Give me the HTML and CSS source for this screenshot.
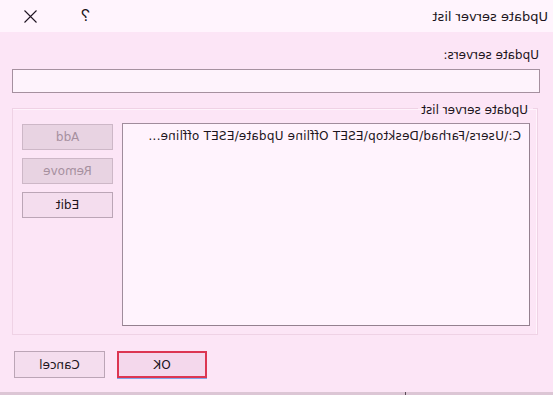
FILE: index.html
```html
<!DOCTYPE html>
<html>
<head>
<meta charset="utf-8">
<title>Update server list</title>
<link rel="stylesheet" href="styles.css">
</head>
<body>
<div class="window">
  <div class="titlebar">
    <span class="title">Update server list</span>
    <span class="help">?</span>
    <svg class="close" width="13" height="13" viewBox="0 0 13 13"><path d="M0.5 0.5 L12.5 12.5 M12.5 0.5 L0.5 12.5" stroke="#1f1422" stroke-width="1.1" fill="none"/></svg>
  </div>
  <div class="content">
    <div class="label">Update servers:</div>
    <input class="server-input" type="text">
    <fieldset class="group">
      <legend>Update server list</legend>
      <div class="list">C:\Users\Farhad\Desktop\ESET Offline Update\ESET offline...</div>
      <div class="buttons">
        <button class="btn" disabled>Add</button>
        <button class="btn" disabled>Remove</button>
        <button class="btn">Edit</button>
      </div>
    </fieldset>
    <div class="footer">
      <button class="btn big ok">OK</button>
      <button class="btn big">Cancel</button>
    </div>
  </div>
  <div class="bottom-strip"><span class="tick"></span></div>
</div>
</body>
</html>
```
FILE: styles.css
```css
html, body {
  margin: 0;
  padding: 0;
}
body {
  background: #fce5f6;
  font-family: "DejaVu Sans", sans-serif;
  font-size: 12px;
  color: #1c1420;
}
.window {
  width: 553px;
  height: 395px;
  transform: scaleX(-1);
  display: flex;
  flex-direction: column;
  background: #fce5f6;
  overflow: hidden;
}
.titlebar {
  height: 32px;
  flex: none;
  background: #fff4fd;
  display: flex;
  align-items: center;
  padding-left: 5px;
}
.title {
  flex: 1;
  font-size: 13px;
  line-height: 15px;
}
.help {
  width: 8px;
  font-family: "Liberation Sans", sans-serif;
  font-size: 16px;
  line-height: 16px;
  margin-right: 45px;
}
.close {
  display: block;
  margin-right: 24px;
}
.content {
  flex: 1;
  padding: 16px 12px 0 13px;
  display: flex;
  flex-direction: column;
}
.label {
  line-height: 15px;
  margin-left: 1px;
}
.server-input {
  margin: 6px 0 0 0;
  height: 24px;
  box-sizing: border-box;
  border: 1px solid #a5909f;
  background: #fef3fc;
  width: 100%;
  font: inherit;
  padding: 0 4px;
  outline: none;
}
.group {
  margin: 6px 0 0 2px;
  padding: 5px 9px 8px 7px;
  border: 1px solid #efd2e5;
  box-shadow: inset 1px 1px 0 #fff3fc;
  min-inline-size: 0;
  display: flex;
  gap: 9px;
  align-items: flex-start;
}
.group legend {
  padding: 4px 3px 0 5px;
  margin-left: -3px;
  line-height: 15px;
}
.list {
  width: 408px;
  height: 203px;
  box-sizing: border-box;
  border: 1px solid #a08c9c;
  border-left-color: #94808f;
  border-bottom-color: #94808f;
  background: #fff3fd;
  padding: 5px 8px;
  line-height: 15px;
  letter-spacing: 0.22px;
  white-space: nowrap;
  overflow: hidden;
}
.buttons {
  display: flex;
  flex-direction: column;
  gap: 8px;
  margin-top: 1px;
  width: 91px;
}
.btn {
  height: 26px;
  box-sizing: border-box;
  border: 1px solid #bba5b6;
  background: #f4ddee;
  font: inherit;
  color: #1c1420;
  padding: 0;
  margin: 0;
}
.btn:disabled {
  background: #e8d3e2;
  color: #a6909f;
  border-color: #cdb7c7;
}
.footer {
  margin-top: 16px;
  display: flex;
  justify-content: flex-end;
  gap: 12px;
  padding-right: 2px;
}
.big {
  height: 27px;
  width: 91px;
}
.ok {
  width: 90px;
  border: 2px solid #dc3652;
  background: #f4d8ec;
  box-shadow: 0 1px 0 #7fa6e8;
}
.bottom-strip {
  height: 3px;
  flex: none;
  background: #dcc6d5;
  display: flex;
}
.tick {
  width: 1px;
  height: 3px;
  margin-left: 147px;
  background: #5a4a56;
}
```
